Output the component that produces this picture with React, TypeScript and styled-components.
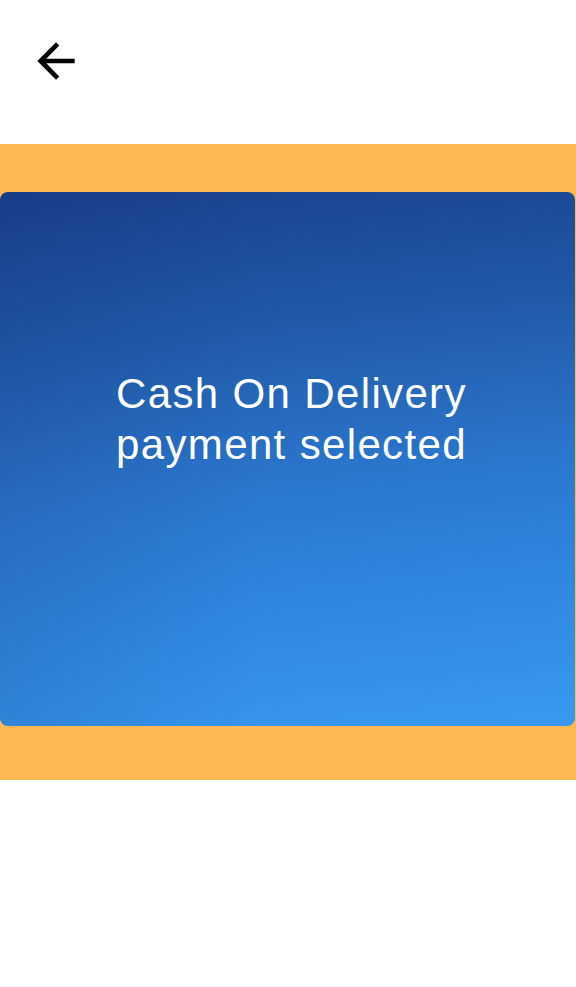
import React from "react";
import styled, { createGlobalStyle } from "styled-components";

const Global = createGlobalStyle`
  html, body { margin: 0; padding: 0; background: #ffffff; }
  body { font-family: "Liberation Sans", Arial, sans-serif; }
`;

const Page = styled.div`
  width: 576px;
  min-height: 987px;
  background: #ffffff;
  display: flex;
  flex-direction: column;
`;

const Header = styled.header`
  height: 144px;
  display: flex;
  align-items: flex-start;
  padding: 33px 0 0 28px;
  box-sizing: border-box;
`;

const BackButton = styled.button`
  width: 56px;
  height: 56px;
  padding: 0;
  border: none;
  background: transparent;
  display: flex;
  cursor: pointer;
`;

const Band = styled.section`
  background: #feb855;
  padding: 48px 1px 54px 0;
  display: flex;
`;

const Card = styled.div`
  flex: 1;
  height: 534px;
  border-radius: 8px;
  background:
    linear-gradient(90deg, rgba(18, 40, 110, 0.14) 0%, rgba(18, 40, 110, 0) 45%),
    linear-gradient(174deg, #1a408c 0%, #215aa9 28%, #2b77cf 55%, #3189e2 78%, #3899ef 100%);
  display: flex;
  flex-direction: column;
  align-items: center;
  padding: 176px 0 0 8px;
  box-sizing: border-box;
`;

const Message = styled.p`
  margin: 0;
  color: #ffffff;
  font-family: "Liberation Sans", Arial, sans-serif;
  font-size: 42px;
  line-height: 51px;
  letter-spacing: 1.35px;
  text-align: left;
`;

export default function App() {
  return (
    <>
      <Global />
      <Page>
        <Header>
          <BackButton aria-label="Back">
            <svg width="56" height="56" viewBox="0 0 24 24">
              <path d="M20 11H7.83l5.59-5.59L12 4l-8 8 8 8 1.41-1.41L7.83 13H20v-2z" fill="#000" />
            </svg>
          </BackButton>
        </Header>
        <Band>
          <Card>
            <Message>
              Cash On Delivery
              <br />
              payment selected
            </Message>
          </Card>
        </Band>
      </Page>
    </>
  );
}
